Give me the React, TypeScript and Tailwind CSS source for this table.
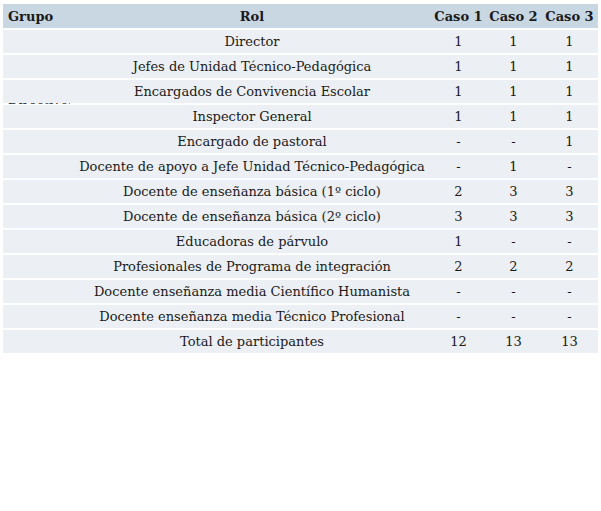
import React from "react";

const rows: [string, string, string, string][] = [
  ["Director", "1", "1", "1"],
  ["Jefes de Unidad Técnico-Pedagógica", "1", "1", "1"],
  ["Encargados de Convivencia Escolar", "1", "1", "1"],
  ["Inspector General", "1", "1", "1"],
  ["Encargado de pastoral", "-", "-", "1"],
  ["Docente de apoyo a Jefe Unidad Técnico-Pedagógica", "-", "1", "-"],
  ["Docente de enseñanza básica (1º ciclo)", "2", "3", "3"],
  ["Docente de enseñanza básica (2º ciclo)", "3", "3", "3"],
  ["Educadoras de párvulo", "1", "-", "-"],
  ["Profesionales de Programa de integración", "2", "2", "2"],
  ["Docente enseñanza media Científico Humanista", "-", "-", "-"],
  ["Docente enseñanza media Técnico Profesional", "-", "-", "-"],
  ["Total de participantes", "12", "13", "13"],
];

const cols = "grid grid-cols-[70px_358px_55px_55px_57px]";

export default function App() {
  return (
    <div
      className="relative w-[601px] h-[511px] bg-white text-[#1a1a1a] pt-[4px] px-[3px]"
      style={{ fontFamily: '"DejaVu Serif", serif' }}
    >
      <div className="absolute left-[8px] top-[102px] h-[2px] w-[62px] overflow-hidden">
        <div className="-mt-[10px] text-[13px] leading-[15px] text-[#333]">Directivos</div>
      </div>
      <div className="relative flex flex-col gap-[2px]">
        <div className={`${cols} h-[24px] items-center bg-[#c9d7e2] text-[13px] font-bold pt-[2px]`}>
          <div className="pl-[5px]">Grupo</div>
          <div className="text-center">Rol</div>
          <div className="text-center">Caso 1</div>
          <div className="text-center">Caso 2</div>
          <div className="text-center">Caso 3</div>
        </div>
        {rows.map((r, i) => (
          <div key={i} className={`${cols} h-[23px] items-center bg-[#eceff4] text-[13px] font-light pt-[1px]`}>
            <div></div>
            <div className="text-center whitespace-nowrap">{r[0]}</div>
            <div className="text-center">{r[1]}</div>
            <div className="text-center">{r[2]}</div>
            <div className="text-center">{r[3]}</div>
          </div>
        ))}
      </div>
    </div>
  );
}
